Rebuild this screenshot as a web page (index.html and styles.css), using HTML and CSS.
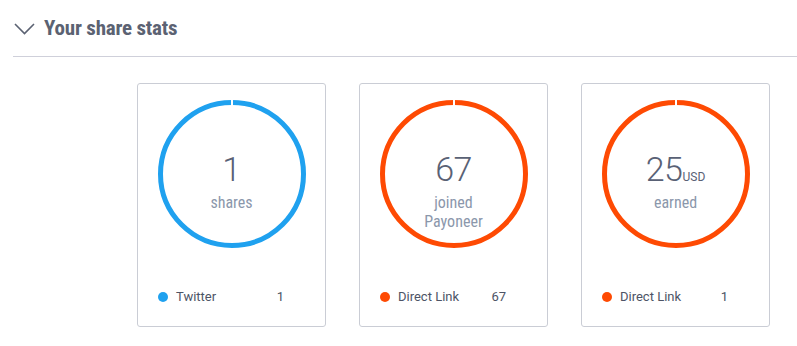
FILE: index.html
```html
<!DOCTYPE html>
<html>
<head>
<meta charset="utf-8">
<link rel="stylesheet" href="styles.css">
</head>
<body>
<section class="panel">
  <header class="head">
    <svg class="chev" width="21" height="12" viewBox="0 0 21 12"><polyline points="1,1 10.5,10.5 20,1" fill="none" stroke="#5b6272" stroke-width="1.6"/></svg>
    <h2 class="title">Your share stats</h2>
  </header>
  <div class="cards">
    <div class="card">
      <div class="ring blue">
        <div class="num">1</div>
        <div class="lbl">shares</div>
      </div>
      <div class="legend">
        <span class="dot blue-dot"></span><span class="name">Twitter</span><span class="val">1</span>
      </div>
    </div>
    <div class="card">
      <div class="ring orange">
        <div class="num">67</div>
        <div class="lbl">joined<br>Payoneer</div>
      </div>
      <div class="legend">
        <span class="dot orange-dot"></span><span class="name">Direct Link</span><span class="val">67</span>
      </div>
    </div>
    <div class="card">
      <div class="ring orange">
        <div class="num">25<span class="unit">USD</span></div>
        <div class="lbl">earned</div>
      </div>
      <div class="legend">
        <span class="dot orange-dot"></span><span class="name">Direct Link</span><span class="val">1</span>
      </div>
    </div>
  </div>
</section>
</body>
</html>
```
FILE: styles.css
```css
html, body { margin: 0; padding: 0; background: #fff; }
body { font-family: Roboto, "Noto Sans", sans-serif; }
.panel { padding: 0 0 0 13px; }
.head {
  display: flex;
  align-items: center;
  height: 57px;
  border-bottom: 1px solid #cfd0da;
  padding-bottom: 1px;
  box-sizing: border-box;
}
.chev { margin: 2px 0 0 1px; }
.title {
  margin: 0 0 0 9px;
  font-size: 21px;
  font-weight: 700;
  font-stretch: 75%;
  letter-spacing: -0.2px;
  color: #5b6272;
}
.cards {
  display: flex;
  gap: 33px;
  padding: 26px 0 0 124px;
}
.card {
  width: 189px;
  height: 244px;
  box-sizing: border-box;
  border: 1px solid #cacdd5;
  border-radius: 3px;
  padding-top: 16px;
  display: flex;
  flex-direction: column;
  align-items: center;
}
.ring {
  position: relative;
  width: 148px;
  height: 148px;
  box-sizing: border-box;
  border: 5px solid;
  border-radius: 50%;
  text-align: center;
  padding-top: 46px;
}
.ring::before {
  content: "";
  position: absolute;
  top: -6px;
  left: 68px;
  width: 2px;
  height: 8px;
  background: #fff;
}
.blue { border-color: #1fa1ef; }
.orange { border-color: #fe4a03; }
.num {
  font-size: 34px;
  line-height: 36px;
  font-weight: 300;
  letter-spacing: -0.5px;
  color: #596175;
}
.unit {
  font-size: 12px;
  line-height: 1;
  font-weight: 400;
  letter-spacing: 0;
}
.lbl {
  margin-top: 6px;
  font-size: 16px;
  line-height: 19px;
  font-stretch: 75%;
  color: #8b97ab;
}
.legend {
  margin-top: 41px;
  align-self: stretch;
  display: flex;
  align-items: center;
  padding: 0 41px 0 20px;
  font-size: 13px;
  color: #4d5466;
}
.dot {
  width: 10px;
  height: 10px;
  border-radius: 50%;
  margin-right: 8px;
}
.blue-dot { background: #1fa1ef; }
.orange-dot { background: #fe4a03; }
.name { flex: 1; }
.val { text-align: right; }
```
